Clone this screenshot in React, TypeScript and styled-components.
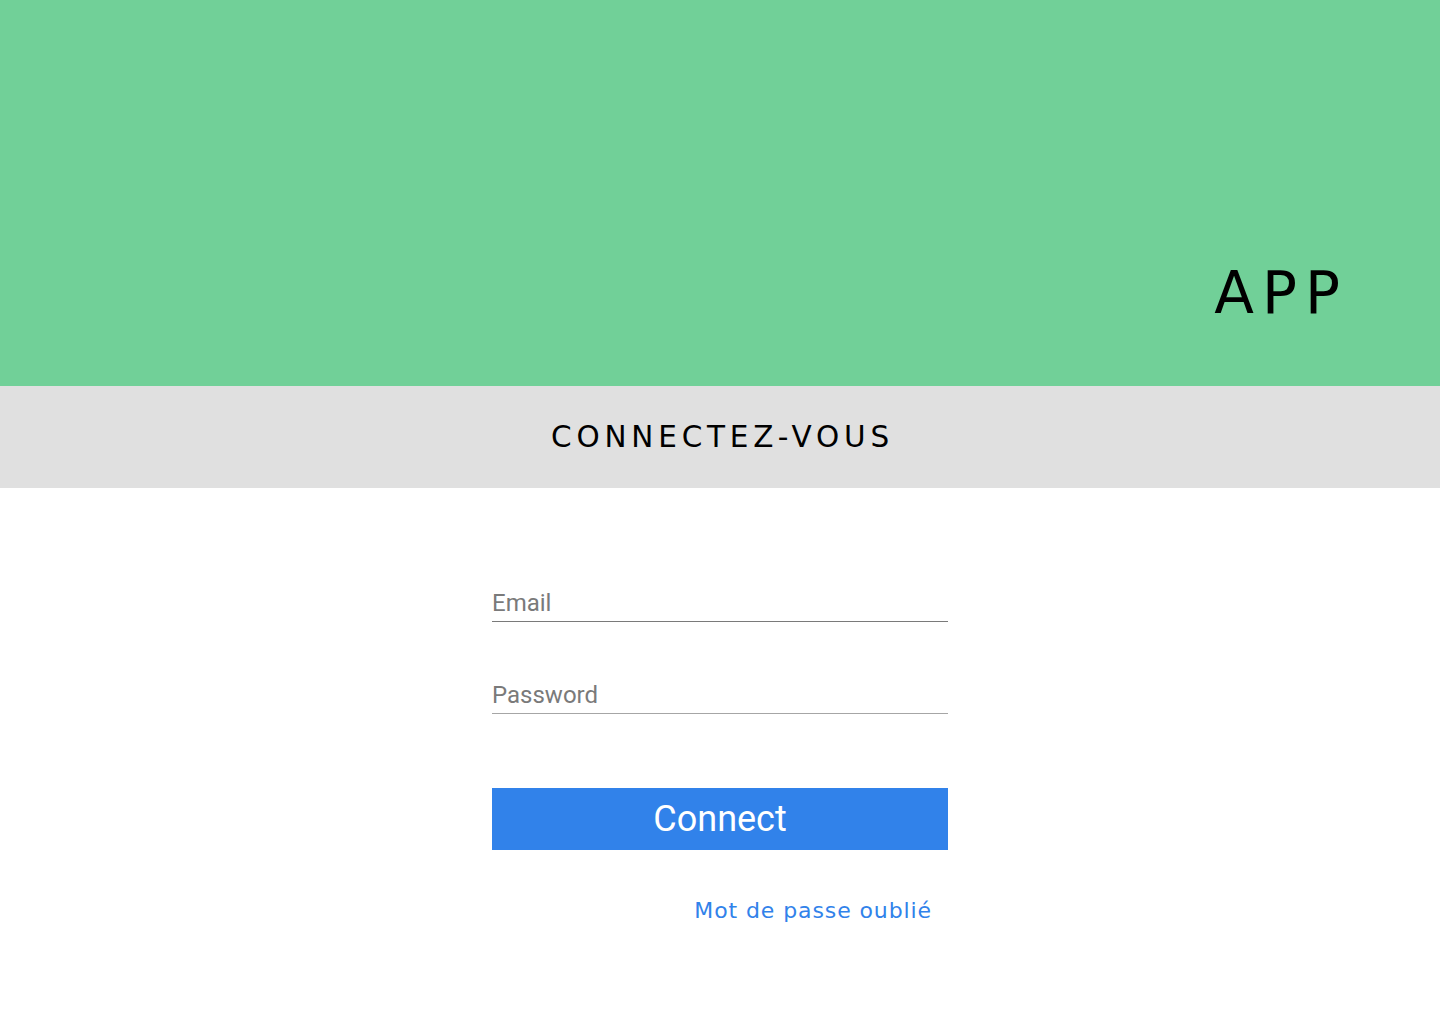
import React from "react";
import styled, { createGlobalStyle } from "styled-components";

const Global = createGlobalStyle`
  html, body { margin: 0; padding: 0; background: #ffffff; }
  body { font-family: Roboto, "Liberation Sans", sans-serif; }
  * { box-sizing: border-box; }
`;

const Page = styled.div`
  width: 100%;
  min-height: 1024px;
  display: flex;
  flex-direction: column;
  background: #ffffff;
`;

const Hero = styled.header`
  height: 386px;
  background: #71d098;
  display: flex;
  align-items: flex-end;
  justify-content: flex-end;
  padding: 0 92px 64px 0;
`;

const AppTitle = styled.h1`
  margin: 0;
  font-family: "DejaVu Sans", "Open Sans", sans-serif;
  font-weight: 400;
  font-size: 58px;
  line-height: 1;
  letter-spacing: 8px;
  color: #000000;
`;

const Band = styled.div`
  height: 102px;
  background: #e0e0e0;
  display: flex;
  align-items: center;
  justify-content: center;
`;

const BandTitle = styled.h2`
  margin: 0 0 0 5px;
  font-family: "DejaVu Sans", "Open Sans", sans-serif;
  font-weight: 400;
  font-size: 29.5px;
  letter-spacing: 4.8px;
  color: #000000;
`;

const Form = styled.form`
  width: 456px;
  margin: 0 auto;
  padding-top: 101px;
  display: flex;
  flex-direction: column;
`;

const Field = styled.input<{ $gap?: number; $line: string }>`
  width: 100%;
  border: none;
  border-bottom: 1px solid ${(p) => p.$line};
  outline: none;
  padding: 0 0 4px 0;
  margin-bottom: ${(p) => p.$gap ?? 0}px;
  font-family: Roboto, "Liberation Sans", sans-serif;
  font-size: 24px;
  color: #333;
  background: transparent;
  &::placeholder { color: #7a7a7a; }
`;

const Button = styled.button`
  width: 100%;
  height: 62px;
  border: none;
  background: #3182ea;
  color: #ffffff;
  font-family: Roboto, "Liberation Sans", sans-serif;
  font-size: 36px;
  cursor: pointer;
`;

const Forgot = styled.a`
  align-self: flex-end;
  margin: 48px 16px 0 0;
  font-family: "DejaVu Sans", "Open Sans", sans-serif;
  font-size: 22px;
  letter-spacing: 0.9px;
  color: #3182ea;
  text-decoration: none;
`;

export default function App() {
  return (
    <Page>
      <Global />
      <Hero>
        <AppTitle>APP</AppTitle>
      </Hero>
      <Band>
        <BandTitle>CONNECTEZ-VOUS</BandTitle>
      </Band>
      <Form onSubmit={(e) => e.preventDefault()}>
        <Field type="email" placeholder="Email" $gap={59} $line="#7a7a7a" />
        <Field type="password" placeholder="Password" $gap={74} $line="#a6a6a6" />
        <Button type="submit">Connect</Button>
        <Forgot href="#">Mot de passe oublié</Forgot>
      </Form>
    </Page>
  );
}
